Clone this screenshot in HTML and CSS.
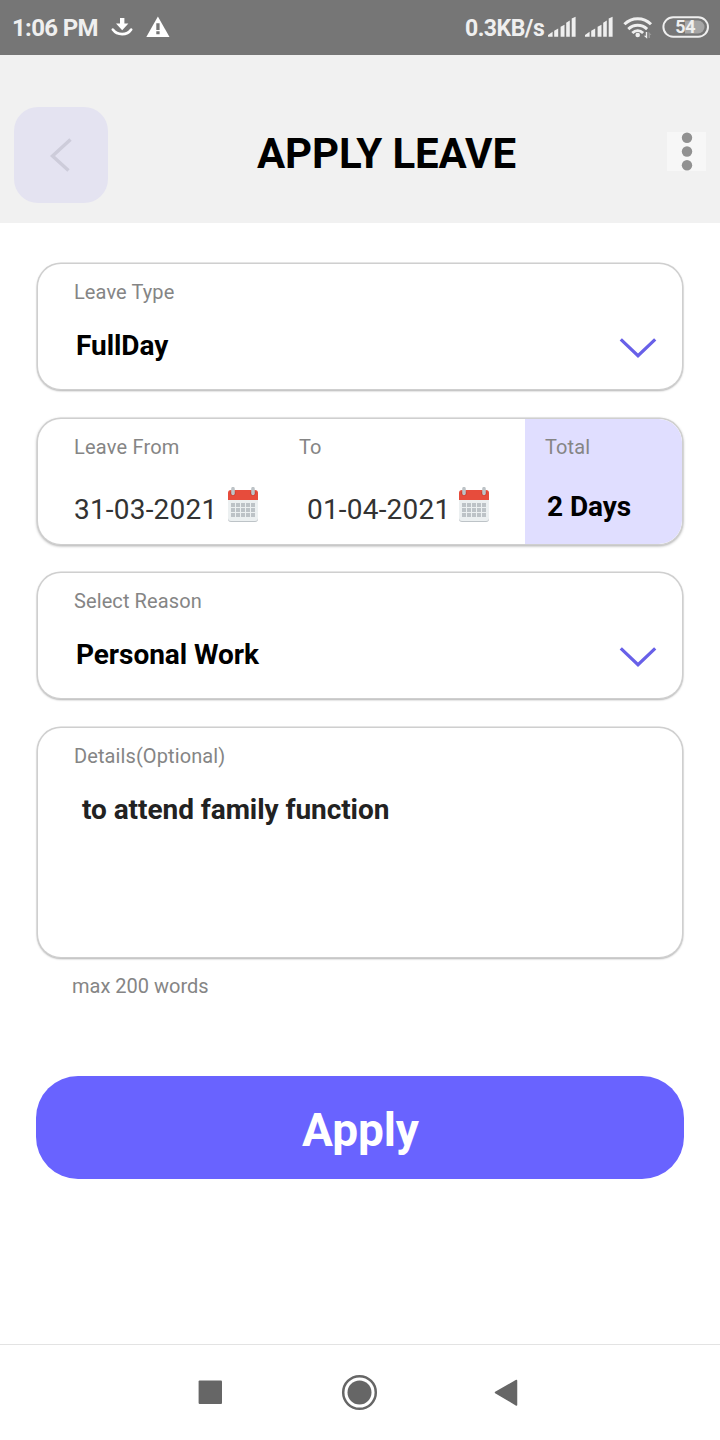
FILE: index.html
```html
<!DOCTYPE html>
<html lang="en">
<head>
<meta charset="utf-8">
<title>Apply Leave</title>
<link rel="stylesheet" href="styles.css">
</head>
<body>
<div class="screen">
  <div class="status">
    <span class="clock">1:06 PM</span>
    <svg class="status-left" width="60" height="24" viewBox="110 16 60 24">
      <path d="M120 18h4.400v5.600h4l-6.200 6.600-6.200-6.600h4z" fill="#fff"/>
      <path d="M112.800 29.500c4.500 6.200 14.300 6.200 18.400 0" fill="none" stroke="#fff" stroke-width="2.600" stroke-linecap="round"/>
      <path d="M157.900 16.500L169.500 37H146.300z" fill="#fff"/>
      <path d="M156.300 23.300h3.300v6.600h-3.300zM156.300 31.300h3.300v3h-3.300z" fill="#767676"/>
    </svg>
    <span class="speed">0.3KB/s</span>
    <svg class="status-right" width="164" height="26" viewBox="547 14 164 26">
      <g id="bars" fill="#efefef">
        <path d="M548 36.700v-1.800l4.600-3.200v5zM554.200 36.700v-6l4-2.300v8.300zM560.600 36.700v-10l3.900-2v12zM566.200 36.700V22.800l3.600-2.300v16.200zM571.700 36.700V18.600l3.900-1.900v20z"/>
      </g>
      <use href="#bars" x="37"/>
      <g fill="none" stroke="#efefef" stroke-width="3">
        <path d="M624.400 24.300c7.600-7.400 19-7.400 26.600 0"/>
        <path d="M628.300 29.100c5.500-5 13.300-5 18.800 0"/>
        <path d="M632.300 33c3.200-2.900 7.600-2.900 10.800 0"/>
      </g>
      <circle cx="637.700" cy="35" r="2.300" fill="#efefef"/>
      <path d="M647.200 32v6.800l-3.400-3h2V32z" fill="#efefef"/>
      <path d="M648.500 38v-6.500l3 3.500h-1.500v3z" fill="#999"/>
      <path d="M685 20.500h13a6.500 6.500 0 0 1 0 13h-13z" fill="#a6a6a6"/>
      <rect x="663.400" y="17.300" width="44.600" height="19.400" rx="9.700" fill="none" stroke="#efefef" stroke-width="2"/>
      <text class="battery" x="685.300" y="33.300" text-anchor="middle">54</text>
    </svg>
  </div>

  <header class="header">
    <div class="back">
      <svg width="24" height="36" viewBox="49 137 24 36"><path d="M70.500 139.500L52.500 156L68.500 170.500" fill="none" stroke="#cdccda" stroke-width="3.400"/></svg>
    </div>
    <h1 class="title">APPLY LEAVE</h1>
    <svg class="more" width="39" height="39" viewBox="0 0 39 39"><rect width="39" height="39" fill="#f7f7f7"/><g fill="#919191"><circle cx="20" cy="5.800" r="5.200"/><circle cx="20" cy="19.500" r="5.200"/><circle cx="20" cy="33.200" r="5.200"/></g></svg>
  </header>

  <main class="form">
    <section class="card">
      <div class="label">Leave Type</div>
      <div class="row">
        <span class="value">FullDay</span>
        <svg class="chevron" width="38" height="24" viewBox="0 0 38 24"><path d="M1.800 2.300L19 18.700L36.200 2.300" fill="none" stroke="#6860e8" stroke-width="3.200"/></svg>
      </div>
    </section>

    <section class="card dates">
      <div class="from">
        <div class="label from-label">Leave From</div>
        <div class="date-row">
          <span class="date">31-03-2021</span>
          <svg class="calendar" width="30" height="36" viewBox="0 0 30 36">
            <g id="cal">
              <rect y="12" width="30" height="23" rx="3" fill="#bdc3c7"/>
              <path d="M0 13h30v18a3 3 0 0 1-3 3H3a3 3 0 0 1-3-3z" fill="#ecf0f1"/>
              <path d="M0 13V6a3 3 0 0 1 3-3h24a3 3 0 0 1 3 3v7z" fill="#e74c3c"/>
              <circle cx="5" cy="6" r="2.600" fill="#bf392b"/><circle cx="25" cy="6" r="2.600" fill="#bf392b"/>
              <path d="M5 1.700V6.500M25 1.700V6.500" stroke="#bdc3c7" stroke-width="3.600" stroke-linecap="round"/>
              <path d="M3 18h24M3 23h24M3 28h24" stroke="#bdc3c7" stroke-width="4" stroke-dasharray="4 1"/>
            </g>
          </svg>
        </div>
      </div>
      <div class="to">
        <div class="label">To</div>
        <div class="date-row">
          <span class="date">01-04-2021</span>
          <svg class="calendar" width="30" height="36" viewBox="0 0 30 36"><use href="#cal"/></svg>
        </div>
      </div>
      <div class="total">
        <div class="label">Total</div>
        <div class="value days">2 Days</div>
      </div>
    </section>

    <section class="card">
      <div class="label">Select Reason</div>
      <div class="row">
        <span class="value">Personal Work</span>
        <svg class="chevron" width="38" height="24" viewBox="0 0 38 24"><path d="M1.800 2.300L19 18.700L36.200 2.300" fill="none" stroke="#6860e8" stroke-width="3.200"/></svg>
      </div>
    </section>

    <section class="card details">
      <div class="label">Details(Optional)</div>
      <div class="value note">to attend family function</div>
    </section>

    <div class="label hint">max 200 words</div>
    <button class="apply">Apply</button>
  </main>

  <nav class="nav">
    <svg width="720" height="95" viewBox="0 1345 720 95" fill="#666">
      <rect x="198.600" y="1380.600" width="23.400" height="23.400" rx="1"/>
      <circle cx="359.500" cy="1392.500" r="16.300" fill="none" stroke="#666" stroke-width="2.500"/>
      <circle cx="359.500" cy="1392.500" r="12"/>
      <path d="M495.500 1392.500L516.500 1380.500V1405z" stroke="#666" stroke-width="1.500" stroke-linejoin="round"/>
    </svg>
  </nav>
</div>
</body>
</html>
```
FILE: styles.css
```css
* { box-sizing: border-box; }
body { margin: 0; background: #fff; font-family: Roboto, "Liberation Sans", sans-serif; }
svg { display: block; flex: none; }
.screen { width: 720px; height: 1440px; display: flex; flex-direction: column; background: #fff; overflow: hidden; }

.status { height: 55px; background: #767676; display: flex; align-items: flex-start; color: #efefef; padding-left: 12px; font-weight: 700; white-space: nowrap; }
.clock { width: 98px; font-size: 24px; line-height: 28px; padding-top: 14px; letter-spacing: -.65px; }
.status-left { margin-top: 16px; }
.speed { margin-left: 295px; width: 82px; font-size: 23px; line-height: 28px; padding-top: 15px; letter-spacing: -.5px; }
.status-right { margin-top: 14px; }
.battery { font: 700 18px Roboto, sans-serif; fill: #efefef; letter-spacing: -.3px; }

.header { height: 168px; background: #f1f1f1; display: flex; align-items: flex-start; padding-left: 14px; }
.back { width: 94px; height: 96px; margin-top: 52px; border-radius: 24px; background: #e4e3f1; display: flex; padding: 30px 0 0 35px; }
.title { margin: 74px 0 0 149px; width: 410px; font-size: 42px; line-height: 50px; font-weight: 700; color: #000; white-space: nowrap; letter-spacing: -.1px; }
.more { margin-top: 77px; }

.form { height: 1121px; padding: 41px 38px 0; }
.card { height: 125px; border-radius: 23px; background: #fff; box-shadow: 0 0 0 1.500px #cfcfcf, 0 1px 2px 1px rgba(0,0,0,.34); padding: 16px 25px 0 36px; margin-bottom: 30px; }
.label { font-size: 20px; line-height: 24px; color: #858585; white-space: nowrap; letter-spacing: .1px; }
.from-label { letter-spacing: .2px; }
.row { display: flex; justify-content: space-between; margin-top: 25px; }
.value { font-size: 28px; line-height: 33px; font-weight: 700; color: #000; white-space: nowrap; padding-left: 2px; letter-spacing: -.06px; }
.chevron { margin-top: 8px; }

.dates { display: flex; padding-right: 0; padding-top: 0; margin-bottom: 29px; overflow: hidden; box-shadow: 0 0 0 1.500px #cfcfcf, 0 1px 3px 1px rgba(0,0,0,.38); }
.from { width: 225px; padding-top: 16px; }
.to { width: 226px; padding-top: 16px; }
.date-row { display: flex; margin-top: 28px; }
.date { width: 154px; margin-top: 6px; font-size: 28px; line-height: 33px; color: #333; white-space: nowrap; letter-spacing: .2px; }
.to .date { margin-left: 8px; width: 152px; }
.total { flex: 1; padding: 16px 0 0 20px; background: #e0deff; border-radius: 0 23px 23px 0; }
.days { margin-top: 31px; }

.details { height: 229px; margin-bottom: 17px; }
.note { margin-top: 25px; padding-left: 8px; color: #222; }
.hint { padding-left: 34px; letter-spacing: 0; }
.apply { display: block; width: 648px; height: 103px; margin: 78px 0 0 -2px; padding: 5px 0 0 1px; border: 0; border-radius: 42px; background: #6963ff; color: #fff; font: 700 46px/54px Roboto, sans-serif; letter-spacing: -.1px; }

.nav { height: 96px; border-top: 1px solid #e3e3e3; }
```
